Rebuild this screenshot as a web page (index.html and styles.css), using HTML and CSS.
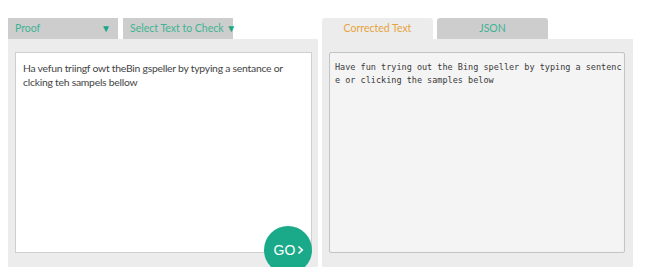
FILE: index.html
```html
<!DOCTYPE html>
<html lang="en">
<head>
  <meta charset="UTF-8">
  <title>Bing Spell Check</title>
  <link rel="stylesheet" href="styles.css">
</head>
<body>

  <div class="wrap">
    <div class="col">
      <div class="tabs">
        <div class="tab select-box">
          <span>Proof</span>
          <span class="arrow">&#9660;</span>
        </div>
        <div class="tab select-box">
          <span>Select Text to Check <span class="arrow">&#9660;</span></span>
        </div>
      </div>
      <div class="panel">
        <div class="input-box">Ha vefun triingf owt theBin gspeller by typying a sentance or clcking teh sampels bellow</div>
        <button class="go">GO<svg width="7" height="10" viewBox="0 0 7 10"><path d="M1.5 1.5 L5.2 5 L1.5 8.5" fill="none" stroke="#fff" stroke-width="1.7"/></svg></button>
      </div>
    </div>

    <div class="col">
      <div class="tabs">
        <div class="tab result-tab active">Corrected Text</div>
        <div class="tab result-tab">JSON</div>
      </div>
      <div class="panel">
        <div class="output-box"><div class="mono">Have fun trying out the Bing speller by typing a sentence or clicking the samples below</div></div>
      </div>
    </div>
  </div>

</body>
</html>
```

FILE: styles.css
```css
body {
  margin: 0;
  padding: 0;
  background: #fff;
  font-family: Lato, "Open Sans", sans-serif;
  color: #333;
}
.wrap {
  display: flex;
  gap: 4px;
  padding: 18px 0 0 8px;
}
.col {
  width: 310px;
}
.col + .col {
  width: 311px;
}
.tabs {
  display: flex;
  gap: 5px;
  height: 21px;
}
.tab {
  width: 110px;
  height: 21px;
  background: #cdcdcd;
  color: #3fb393;
  font-size: 10.5px;
  line-height: 21px;
  white-space: nowrap;
  box-sizing: border-box;
}
.select-box {
  display: flex;
  justify-content: space-between;
  padding: 0 7px;
}
.select-box .arrow {
  font-size: 10px;
  color: #1aa884;
}
.result-tab {
  text-align: center;
  border-radius: 3px 3px 0 0;
  width: 111px;
}
.result-tab + .result-tab {
  margin-left: -1px;
}
.result-tab.active {
  background: #ececec;
  color: #e8a33c;
}
.panel {
  position: relative;
  background: #ececec;
  height: 228px;
  padding: 13px 6px 0 7px;
  box-sizing: border-box;
}
.input-box {
  height: 201px;
  background: #fff;
  border: 1px solid #cfcfcf;
  box-sizing: border-box;
  padding: 8px 7px;
  font-size: 10.4px;
  letter-spacing: -0.25px;
  line-height: 14px;
  color: #444;
}
.output-box {
  height: 201px;
  background: #f4f4f4;
  border: 1px solid #c4c4c4;
  border-radius: 2px;
  box-shadow: inset 0 0 1px #ddd;
  box-sizing: border-box;
  padding: 8px 5px;
  margin-right: 2px;
}
.mono {
  width: 56ch;
  font-family: "DejaVu Sans Mono", monospace;
  font-size: 8.5px;
  line-height: 13px;
  color: #3a3a3a;
  word-break: break-all;
}
.go {
  position: absolute;
  left: 256px;
  top: 187px;
  width: 48px;
  height: 48px;
  border-radius: 50%;
  border: none;
  background: #1aaa8a;
  color: #fff;
  font-family: "Liberation Sans", Arial, sans-serif;
  font-size: 14px;
  display: flex;
  align-items: center;
  justify-content: center;
  gap: 2px;
  padding: 0 0 0 2px;
}
```
